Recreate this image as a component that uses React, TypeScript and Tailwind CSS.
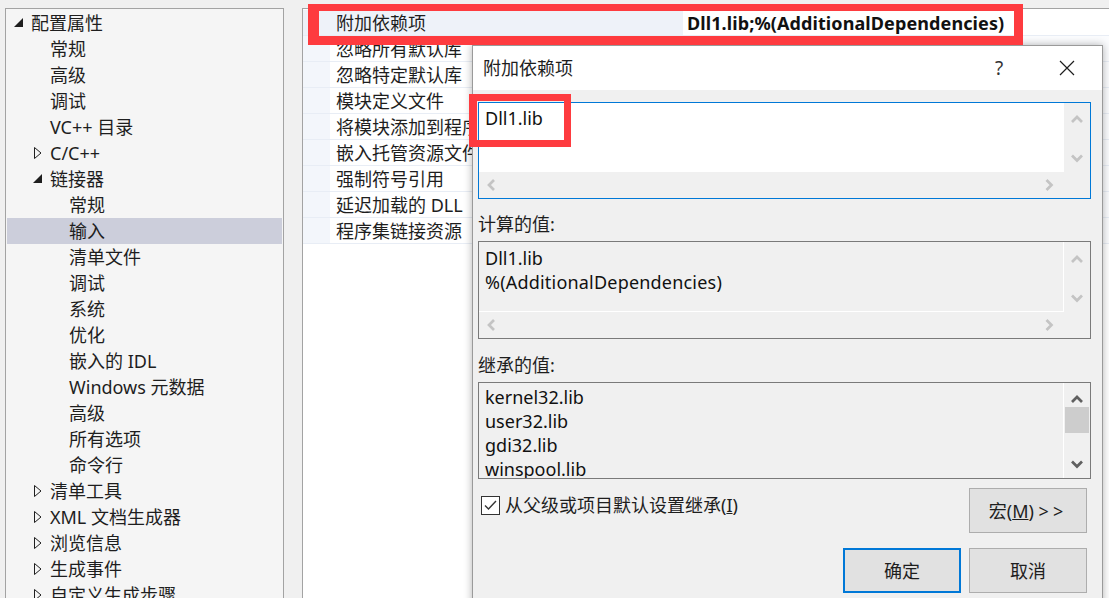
import React from 'react';

type TreeNode = {
  label: string;
  level: 0 | 1 | 2;
  arrow?: 'open' | 'closed';
  selected?: boolean;
};

const TREE: TreeNode[] = [
  { label: '配置属性', level: 0, arrow: 'open' },
  { label: '常规', level: 1 },
  { label: '高级', level: 1 },
  { label: '调试', level: 1 },
  { label: 'VC++ 目录', level: 1 },
  { label: 'C/C++', level: 1, arrow: 'closed' },
  { label: '链接器', level: 1, arrow: 'open' },
  { label: '常规', level: 2 },
  { label: '输入', level: 2, selected: true },
  { label: '清单文件', level: 2 },
  { label: '调试', level: 2 },
  { label: '系统', level: 2 },
  { label: '优化', level: 2 },
  { label: '嵌入的 IDL', level: 2 },
  { label: 'Windows 元数据', level: 2 },
  { label: '高级', level: 2 },
  { label: '所有选项', level: 2 },
  { label: '命令行', level: 2 },
  { label: '清单工具', level: 1, arrow: 'closed' },
  { label: 'XML 文档生成器', level: 1, arrow: 'closed' },
  { label: '浏览信息', level: 1, arrow: 'closed' },
  { label: '生成事件', level: 1, arrow: 'closed' },
  { label: '自定义生成步骤', level: 1, arrow: 'closed' },
];

const INDENT = ['w-0', 'w-[19px]', 'w-[38px]'];

const PROPS = [
  '忽略所有默认库',
  '忽略特定默认库',
  '模块定义文件',
  '将模块添加到程序集',
  '嵌入托管资源文件',
  '强制符号引用',
  '延迟加载的 DLL',
  '程序集链接资源',
];

function OpenArrow() {
  return (
    <svg width="9" height="9" viewBox="0 0 9 9" className="mb-[2px]">
      <polygon points="9,0 9,9 0,9" fill="#1e1e1e" />
    </svg>
  );
}

function ClosedArrow() {
  return (
    <svg width="8" height="12" viewBox="0 0 8 12">
      <polygon points="0.5,0.5 7,6 0.5,11.5" fill="none" stroke="#1e1e1e" />
    </svg>
  );
}

function Chevron({ dir, color }: { dir: 'up' | 'down' | 'left' | 'right'; color: string }) {
  const vertical = dir === 'up' || dir === 'down';
  const pts = {
    up: '1,7 6,2 11,7',
    down: '1,1.5 6,6.5 11,1.5',
    left: '7,1 2,6 7,11',
    right: '1.5,1 6.5,6 1.5,11',
  }[dir];
  return (
    <svg width={vertical ? 12 : 9} height={vertical ? 9 : 12} viewBox={vertical ? '0 0 12 9' : '0 0 9 12'}>
      <polyline points={pts} fill="none" stroke={color} strokeWidth="2.7" />
    </svg>
  );
}

function TreePanel() {
  return (
    <div className="ml-[5px] w-[279px] h-[640px] shrink-0 border border-[#a3a3a3] bg-[#f5f5f5] pt-[1px] px-[1px]">
      {TREE.map((n, i) => (
        <div
          key={i}
          className={`flex items-center h-[26px] text-[#1e1e1e] ${n.selected ? 'bg-[#cccedb]' : ''}`}
        >
          <div className={INDENT[n.level]} />
          <div className="w-[24px] flex justify-end items-center pr-[8px]">
            {n.arrow === 'open' && <OpenArrow />}
            {n.arrow === 'closed' && <ClosedArrow />}
          </div>
          <span className="whitespace-nowrap">{n.label}</span>
        </div>
      ))}
    </div>
  );
}

function PropertyGrid() {
  return (
    <div className="ml-[18px] flex-1 h-[640px] border-l border-t border-[#a3a3a3] bg-white pt-[1px]">
      <div className="flex h-[26px] bg-[#eef2f9] border-b border-[#e8edf5]">
        <div className="w-[27px] shrink-0" />
        <div className="w-[353px] shrink-0 pl-[6px] flex items-center text-[#1e1e1e]">附加依赖项</div>
        <div className="flex-1 bg-white pl-[4px] flex items-center font-bold text-[#111] whitespace-nowrap tracking-[0.1px]">
          Dll1.lib;%(AdditionalDependencies)
        </div>
      </div>
      {PROPS.map((p) => (
        <div key={p} className="flex h-[26px] border-b border-[#e8edf5]">
          <div className="w-[27px] shrink-0 bg-[#f3f6fb]" />
          <div className="w-[353px] shrink-0 pl-[6px] flex items-center text-[#1e1e1e] whitespace-nowrap">{p}</div>
          <div className="flex-1 bg-[#fbfcfe]" />
        </div>
      ))}
    </div>
  );
}

function Dialog() {
  return (
    <div className="absolute left-[472px] top-[45px] w-[631px] h-[580px] border border-[#9a9a9a] bg-[#f0f0f0] shadow-[0_0_8px_rgba(0,0,0,0.3)] flex flex-col">
      {/* title bar */}
      <div className="h-[44px] bg-white flex items-center pl-[10px] text-[#1e1e1e]">
        <span className="flex-1">附加依赖项</span>
        <span className="w-[20px] text-center text-[#333] text-[19px] mr-[50px]">?</span>
        <svg width="16" height="16" viewBox="0 0 16 16" className="mr-[27px]">
          <path d="M1 1 L15 15 M15 1 L1 15" stroke="#1e1e1e" strokeWidth="1.2" />
        </svg>
      </div>

      <div className="flex flex-col pl-[5px] pr-[11px]">
        {/* edit box */}
        <div className="mt-[12px] h-[97px] border border-[#0078d7] flex flex-col">
          <div className="flex h-[69px]">
            <div className="flex-1 bg-white pl-[6px] pt-[3px] leading-[24px] text-[#111]">Dll1.lib</div>
            <div className="w-[26px] flex flex-col items-center justify-between pt-[12px] pb-[9px]">
              <Chevron dir="up" color="#c4c4c4" />
              <Chevron dir="down" color="#c4c4c4" />
            </div>
          </div>
          <div className="flex flex-1">
            <div className="flex-1 flex items-center justify-between pl-[8px] pr-[10px]">
              <Chevron dir="left" color="#c4c4c4" />
              <Chevron dir="right" color="#c4c4c4" />
            </div>
            <div className="w-[26px]" />
          </div>
        </div>

        <div className="mt-[13px] leading-[24px] text-[#1e1e1e]">计算的值:</div>
        <div className="mt-[5px] h-[98px] border border-[#7a7a7a] flex flex-col">
          <div className="flex h-[70px]">
            <div className="flex-1 border-r border-b border-white pl-[6px] pt-[4px] leading-[24px] text-[#111]">
              <div>Dll1.lib</div>
              <div className="tracking-[0.2px]">%(AdditionalDependencies)</div>
            </div>
            <div className="w-[26px] flex flex-col items-center justify-between pt-[13px] pb-[9px]">
              <Chevron dir="up" color="#c4c4c4" />
              <Chevron dir="down" color="#c4c4c4" />
            </div>
          </div>
          <div className="flex flex-1">
            <div className="flex-1 flex items-center justify-between pl-[8px] pr-[10px]">
              <Chevron dir="left" color="#c4c4c4" />
              <Chevron dir="right" color="#c4c4c4" />
            </div>
            <div className="w-[26px]" />
          </div>
        </div>

        <div className="mt-[14px] leading-[24px] text-[#1e1e1e]">继承的值:</div>
        <div className="mt-[5px] h-[97px] border border-[#7a7a7a] flex">
          <div className="flex-1 border-r border-white overflow-hidden pl-[6px] pt-[2px] leading-[24px] text-[#111]">
            <div>kernel32.lib</div>
            <div>user32.lib</div>
            <div>gdi32.lib</div>
            <div>winspool.lib</div>
          </div>
          <div className="w-[26px] flex flex-col items-center pt-[12px] pb-[9px]">
            <Chevron dir="up" color="#606060" />
            <div className="mt-[3px] w-[24px] h-[26px] bg-[#cdcdcd]" />
            <div className="flex-1" />
            <Chevron dir="down" color="#606060" />
          </div>
        </div>
      </div>

      <div className="mt-[9px] flex items-start pl-[8px] pr-[15px]">
        <div className="mt-[8px] w-[19px] h-[19px] border border-[#333] bg-white flex items-center justify-center">
          <svg width="15" height="15" viewBox="0 0 15 15">
            <polyline points="2,7.5 5.5,11 13,3" fill="none" stroke="#333" strokeWidth="1.4" />
          </svg>
        </div>
        <div className="ml-[5px] mt-[5px] leading-[24px] text-[#1e1e1e] flex-1">
          从父级或项目默认设置继承(<span className="underline">I</span>)
        </div>
        <button className="w-[118px] h-[45px] bg-[#e1e1e1] border border-[#adadad] text-[#1e1e1e]">
          宏(<span className="underline">M</span>) <span className="tracking-[4px]">&gt;&gt;</span>
        </button>
      </div>

      <div className="mt-[15px] flex justify-end gap-[8px] pr-[15px]">
        <button className="w-[118px] h-[45px] bg-[#e1e1e1] border-2 border-[#0078d7] text-[#1e1e1e]">确定</button>
        <button className="w-[118px] h-[45px] bg-[#e1e1e1] border border-[#adadad] text-[#1e1e1e]">取消</button>
      </div>
    </div>
  );
}

export default function App() {
  return (
    <div className="relative w-[1109px] h-[598px] overflow-hidden bg-[#f0f0f0] text-[18px] leading-[26px] font-['Noto_Sans','Noto_Sans_CJK_SC',sans-serif]">
      <div className="flex items-start pt-[8px]">
        <TreePanel />
        <PropertyGrid />
      </div>
      <Dialog />
      {/* annotation boxes */}
      <div className="absolute left-[308px] top-[4px] w-[715px] h-[41px] border-t-[7px] border-r-[9px] border-b-[9px] border-l-[11px] border-[#fe3b3f]" />
      <div className="absolute left-[469px] top-[94px] w-[102px] h-[53px] border-[7px] border-l-[8px] border-[#fe3b3f]" />
    </div>
  );
}
